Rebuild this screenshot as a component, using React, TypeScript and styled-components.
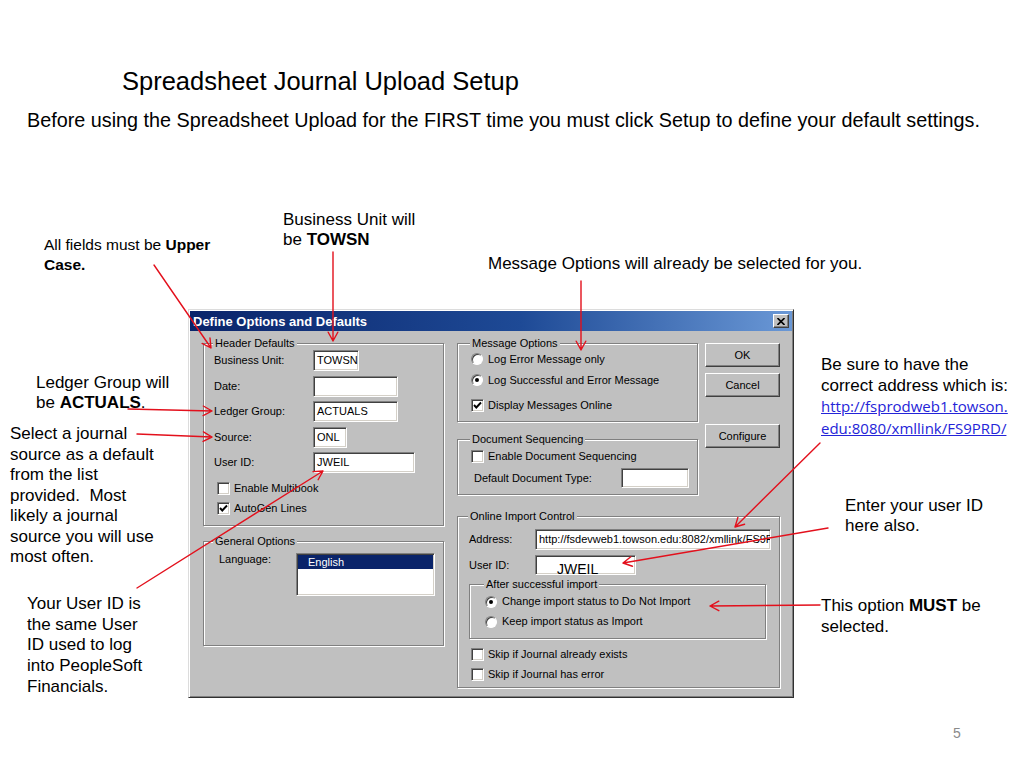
import React from 'react';
import styled, { createGlobalStyle } from 'styled-components';

const GlobalStyle = createGlobalStyle`
  html, body {
    margin: 0;
    padding: 0;
    background: #fff;
  }
  body {
    font-family: "Liberation Sans", Arial, sans-serif;
  }
`;

const Slide = styled.div`
  position: relative;
  width: 1024px;
  height: 768px;
  box-sizing: border-box;
  padding-top: 66px;
  overflow: hidden;
  background: #fff;
  color: #000;
`;

const Title = styled.h1`
  margin: 0 0 13px 122px;
  font: 400 25.5px/30px "Liberation Sans", Arial, sans-serif;
`;

const Lead = styled.p`
  margin: 0 0 0 27px;
  font: 400 19.8px/22px "Liberation Sans", Arial, sans-serif;
  white-space: nowrap;
`;

// callouts sit on the slide canvas at their own spots
const Note = styled.div<{ $x: number; $y: number; $size: number; $lh: number }>`
  position: absolute;
  left: ${(p) => p.$x}px;
  top: ${(p) => p.$y}px;
  font-size: ${(p) => p.$size}px;
  line-height: ${(p) => p.$lh}px;
  white-space: nowrap;
  z-index: 1;
`;

const Link = styled.a`
  font-family: "Open Sans", "Noto Sans", sans-serif;
  font-size: 15px;
  color: #2424d8;
  text-decoration: underline;
`;

const PageNo = styled.div`
  position: absolute;
  left: 953px;
  top: 724px;
  font-size: 14px;
  line-height: 18px;
  color: #8a8a8a;
`;

const Arrows = styled.svg`
  position: absolute;
  left: 0;
  top: 0;
  z-index: 2;
  pointer-events: none;
`;

/* ---------- the dialog ---------- */

const Dialog = styled.div`
  position: absolute;
  left: 188px;
  top: 309px;
  width: 606px;
  height: 389px;
  box-sizing: border-box;
  padding: 1px;
  background: #c0c0c0;
  border: 1px solid;
  border-color: #dcdcdc #303030 #303030 #dcdcdc;
  box-shadow: inset 1px 1px 0 #fff, inset -1px -1px 0 #808080;
  font: 11px/13px "Liberation Sans", Arial, sans-serif;
  color: #000;
  display: flex;
  flex-direction: column;
`;

const TitleBar = styled.div`
  height: 20px;
  flex: none;
  display: flex;
  align-items: center;
  justify-content: space-between;
  padding: 0 3px 0 3px;
  background: linear-gradient(90deg, #0a246a 0%, #1e4a96 55%, #6a98d6 100%);
  color: #fff;
  font-weight: 700;
  font-size: 13px;
`;

const CloseBox = styled.div`
  width: 16px;
  height: 14px;
  box-sizing: border-box;
  background: #c0c0c0;
  border: 1px solid;
  border-color: #fff #404040 #404040 #fff;
  box-shadow: inset -1px -1px 0 #808080;
  display: flex;
  align-items: center;
  justify-content: center;
`;

const Body = styled.div`
  flex: 1;
  display: flex;
  gap: 13px;
  padding: 6px 0 0 13px;
`;

const Column = styled.div<{ $w: number; $gap: number }>`
  width: ${(p) => p.$w}px;
  display: flex;
  flex-direction: column;
  gap: ${(p) => p.$gap}px;
`;

const TopRow = styled.div`
  display: flex;
  gap: 7px;
`;

const Group = styled.fieldset<{ $pad: string }>`
  margin: 0;
  min-width: 0;
  box-sizing: border-box;
  padding: ${(p) => p.$pad};
  border: 1px solid #808080;
  box-shadow: 1px 1px 0 #fff, inset 1px 1px 0 #fff;
  display: flex;
  flex-direction: column;
`;

const SubGroup = styled(Group)`
  margin-top: 3px;
  width: 297px;
`;

const Legend = styled.legend`
  padding: 0 2px;
  margin-left: -1px;
  line-height: 13px;
  background: #c0c0c0;
`;

const FieldGrid = styled.div`
  display: grid;
  grid-template-columns: 99px auto;
  row-gap: 4.5px;
  align-items: center;
`;

const Field = styled.div<{ $w: number; $h?: number }>`
  width: ${(p) => p.$w}px;
  height: ${(p) => p.$h ?? 21}px;
  box-sizing: border-box;
  background: #fff;
  border: 1px solid;
  border-color: #808080 #fff #fff #808080;
  box-shadow: inset 1px 1px 0 #404040, inset -1px -1px 0 #d4d0c8;
  padding: 0 3px;
  display: flex;
  align-items: center;
  white-space: nowrap;
  overflow: hidden;
`;

const Caret = styled.span`
  display: inline-block;
  width: 1px;
  height: 13px;
  background: #000;
  margin-left: 1px;
`;

const BigEntry = styled.span`
  font: 14px/1 "Liberation Sans", Arial, sans-serif;
  margin: 7px 0 0 18px;
`;

const Row = styled.div<{ $mt?: number; $ml?: number }>`
  display: flex;
  align-items: center;
  height: 18px;
  margin-top: ${(p) => p.$mt ?? 0}px;
  margin-left: ${(p) => p.$ml ?? 0}px;
  gap: 4px;
  white-space: nowrap;
`;

const FormRow = styled.div<{ $mt: number; $label: number }>`
  display: grid;
  grid-template-columns: ${(p) => p.$label}px auto;
  align-items: center;
  margin-top: ${(p) => p.$mt}px;
`;

const Label = styled.span<{ $pl?: number }>`
  padding-left: ${(p) => p.$pl ?? 0}px;
`;

const Box = styled.span`
  flex: none;
  width: 13px;
  height: 13px;
  box-sizing: border-box;
  background: #fff;
  border: 1px solid;
  border-color: #808080 #fff #fff #808080;
  box-shadow: inset 1px 1px 0 #404040, inset -1px -1px 0 #d4d0c8;
  display: flex;
  align-items: center;
  justify-content: center;
`;

const Radio = styled.span<{ $on: boolean }>`
  flex: none;
  position: relative;
  width: 12px;
  height: 12px;
  box-sizing: border-box;
  border-radius: 50%;
  background: #fff;
  border: 1px solid;
  border-color: #808080 #fff #fff #808080;
  box-shadow: inset 1px 1px 0 #404040;
  margin-right: 1px;
  &::after {
    content: '';
    display: ${(p) => (p.$on ? 'block' : 'none')};
    position: absolute;
    left: 3px;
    top: 3px;
    width: 4px;
    height: 4px;
    border-radius: 50%;
    background: #000;
  }
`;

const Button = styled.div<{ $mt: number }>`
  height: 24px;
  margin-top: ${(p) => p.$mt}px;
  box-sizing: border-box;
  background: #c0c0c0;
  border: 1px solid;
  border-color: #fff #404040 #404040 #fff;
  box-shadow: inset -1px -1px 0 #808080;
  display: flex;
  align-items: center;
  justify-content: center;
`;

const ListRow = styled.div`
  display: grid;
  grid-template-columns: 82px 139px;
  align-items: start;
  margin-top: 5px;
`;

const ListBox = styled.div`
  height: 43px;
  box-sizing: border-box;
  padding: 1px;
  background: #fff;
  border: 1px solid;
  border-color: #808080 #fff #fff #808080;
  box-shadow: inset 1px 1px 0 #404040, inset -1px -1px 0 #d4d0c8;
`;

const Selected = styled.div`
  height: 14px;
  padding-left: 10px;
  background: #0a246a;
  color: #fff;
  line-height: 14px;
`;

function Check({ on }: { on?: boolean }) {
  return (
    <Box>
      {on && (
        <svg width="9" height="9" viewBox="0 0 9 9">
          <path d="M1 4 L3.3 6.5 L8 1.5" fill="none" stroke="#000" strokeWidth="1.9" />
        </svg>
      )}
    </Box>
  );
}

function arrowPath(x1: number, y1: number, x2: number, y2: number) {
  const a = Math.atan2(y2 - y1, x2 - x1);
  const len = 10;
  const spread = 0.5;
  const ax = x2 - len * Math.cos(a - spread);
  const ay = y2 - len * Math.sin(a - spread);
  const bx = x2 - len * Math.cos(a + spread);
  const by = y2 - len * Math.sin(a + spread);
  return `M${x1} ${y1} L${x2} ${y2} M${ax} ${ay} L${x2} ${y2} L${bx} ${by}`;
}

const ARROWS: [number, number, number, number][] = [
  [154, 265, 211, 348],
  [333, 252, 333, 341],
  [581, 281, 581, 350],
  [128, 409, 212, 411],
  [137, 434, 212, 437],
  [137, 588, 323, 471],
  [820, 443, 735, 527],
  [828, 528, 623, 563],
  [820, 605, 710, 606],
];

export default function App() {
  return (
    <>
      <GlobalStyle />
      <Slide>
        <Title>Spreadsheet Journal Upload Setup</Title>
        <Lead>
          Before using the Spreadsheet Upload for the FIRST time you must click Setup to define your
          default settings.
        </Lead>

        <Note $x={283} $y={210} $size={17} $lh={20}>
          Business Unit will
          <br />
          be <b>TOWSN</b>
        </Note>
        <Note $x={44} $y={235} $size={15.5} $lh={19.5}>
          All fields must be <b>Upper</b>
          <br />
          <b>Case.</b>
        </Note>
        <Note $x={488} $y={254} $size={17} $lh={20}>
          Message Options will already be selected for you.
        </Note>
        <Note $x={36} $y={373} $size={17} $lh={20}>
          Ledger Group will
          <br />
          be <b>ACTUALS</b>.
        </Note>
        <Note $x={10} $y={424} $size={17} $lh={20.5}>
          Select a journal
          <br />
          source as a default
          <br />
          from the list
          <br />
          provided.&nbsp; Most
          <br />
          likely a journal
          <br />
          source you will use
          <br />
          most often.
        </Note>
        <Note $x={27} $y={594} $size={17} $lh={20.7}>
          Your User ID is
          <br />
          the same User
          <br />
          ID used to log
          <br />
          into PeopleSoft
          <br />
          Financials.
        </Note>
        <Note $x={821} $y={355} $size={17} $lh={20.7}>
          Be sure to have the
          <br />
          correct address which is:
          <br />
          <Link>http://fsprodweb1.towson.</Link>
          <br />
          <Link>edu:8080/xmllink/FS9PRD/</Link>
        </Note>
        <Note $x={845} $y={496} $size={17} $lh={20}>
          Enter your user ID
          <br />
          here also.
        </Note>
        <Note $x={821} $y={595} $size={17} $lh={21}>
          This option <b>MUST</b> be
          <br />
          selected.
        </Note>

        <Dialog>
          <TitleBar>
            <span>Define Options and Defaults</span>
            <CloseBox>
              <svg width="8" height="7" viewBox="0 0 8 7">
                <path d="M0.5 0 L7.5 7 M7.5 0 L0.5 7" stroke="#000" strokeWidth="1.6" />
              </svg>
            </CloseBox>
          </TitleBar>
          <Body>
            <Column $w={241} $gap={9}>
              <Group $pad="0 10px 8px 10px">
                <Legend>Header Defaults</Legend>
                <FieldGrid>
                  <span>Business Unit:</span>
                  <Field $w={46}>
                    TOWSN
                    <Caret />
                  </Field>
                  <span>Date:</span>
                  <Field $w={85} />
                  <span>Ledger Group:</span>
                  <Field $w={85}>ACTUALS</Field>
                  <span>Source:</span>
                  <Field $w={34}>ONL</Field>
                  <span>User ID:</span>
                  <Field $w={102}>JWEIL</Field>
                </FieldGrid>
                <Row $mt={6} $ml={3}>
                  <Check />
                  Enable Multibook
                </Row>
                <Row $mt={2} $ml={3}>
                  <Check on />
                  AutoGen Lines
                </Row>
              </Group>
              <Group $pad="0 10px 49px 10px">
                <Legend>General Options</Legend>
                <ListRow>
                  <Label $pl={5}>Language:</Label>
                  <ListBox>
                    <Selected>English</Selected>
                  </ListBox>
                </ListRow>
              </Group>
            </Column>

            <Column $w={323} $gap={15}>
              <TopRow>
                <Column $w={241} $gap={11}>
                  <Group $pad="0 12px 7px 13px">
                    <Legend>Message Options</Legend>
                    <Row>
                      <Radio $on={false} />
                      Log Error Message only
                    </Row>
                    <Row $mt={3}>
                      <Radio $on />
                      Log Successful and Error Message
                    </Row>
                    <Row $mt={7}>
                      <Check on />
                      Display Messages Online
                    </Row>
                  </Group>
                  <Group $pad="0 7px 6px 13px">
                    <Legend>Document Sequencing</Legend>
                    <Row $mt={1}>
                      <Check />
                      Enable Document Sequencing
                    </Row>
                    <FormRow $mt={3} $label={150}>
                      <Label $pl={3}>Default Document Type:</Label>
                      <Field $w={68} $h={20} />
                    </FormRow>
                  </Group>
                </Column>
                <Column $w={75} $gap={0}>
                  <Button $mt={6}>OK</Button>
                  <Button $mt={6}>Cancel</Button>
                  <Button $mt={27}>Configure</Button>
                </Column>
              </TopRow>

              <Group $pad="0 8px 3px 11px">
                <Legend>Online Import Control</Legend>
                <FormRow $mt={6} $label={66}>
                  <span>Address:</span>
                  <Field $w={236}>http://fsdevweb1.towson.edu:8082/xmllink/FS9PRD/</Field>
                </FormRow>
                <FormRow $mt={5} $label={66}>
                  <span>User ID:</span>
                  <Field $w={101} $h={20}>
                    <BigEntry>JWEIL</BigEntry>
                  </Field>
                </FormRow>
                <SubGroup $pad="0 10px 7px 15px">
                  <Legend>After successful import</Legend>
                  <Row $mt={1.5}>
                    <Radio $on />
                    Change import status to Do Not Import
                  </Row>
                  <Row $mt={2}>
                    <Radio $on={false} />
                    Keep import status as Import
                  </Row>
                </SubGroup>
                <Row $mt={7} $ml={2}>
                  <Check />
                  Skip if Journal already exists
                </Row>
                <Row $mt={2} $ml={2}>
                  <Check />
                  Skip if Journal has error
                </Row>
              </Group>
            </Column>
          </Body>
        </Dialog>

        <Arrows width="1024" height="768" viewBox="0 0 1024 768">
          {ARROWS.map(([x1, y1, x2, y2], i) => (
            <path
              key={i}
              d={arrowPath(x1, y1, x2, y2)}
              fill="none"
              stroke="#e3101c"
              strokeWidth="1.4"
              strokeLinecap="round"
              strokeLinejoin="round"
            />
          ))}
        </Arrows>

        <PageNo>5</PageNo>
      </Slide>
    </>
  );
}
